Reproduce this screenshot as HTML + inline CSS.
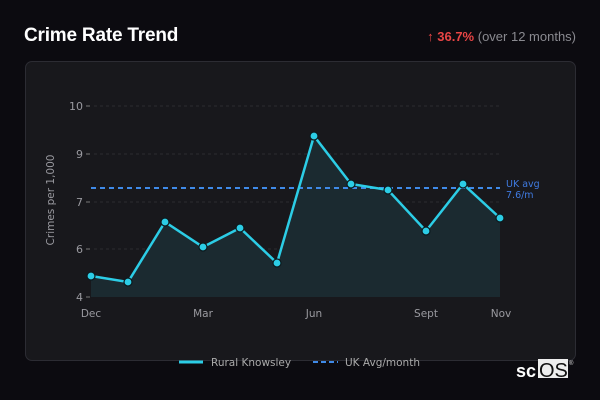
<!DOCTYPE html>
<html><head><meta charset="utf-8"><style>
html,body{margin:0;padding:0;width:600px;height:400px;background:#0c0b10;overflow:hidden;font-family:"Liberation Sans",sans-serif;}
.t{position:absolute;left:24px;top:25px;color:#fff;font:bold 19px "Liberation Sans",sans-serif;letter-spacing:-0.2px}
.c{position:absolute;left:25px;top:61px;width:549px;height:298px;background:#18181c;border:1px solid #2c2c33;border-radius:7px}
.r{position:absolute;right:24px;top:29px;font-size:13px;color:#8a8a90}
.r b{color:#e84545}
</style></head><body>
<div class="t">Crime Rate Trend</div>
<div class="r"><span style="color:#e84545">↑</span> <b>36.7%</b> (over 12 months)</div>
<div class="c"></div>
<svg width="600" height="400" style="position:absolute;left:0;top:0">
<g stroke="#2b2b31" stroke-dasharray="3,3" stroke-width="1">
<line x1="94" y1="106" x2="500" y2="106"/><line x1="94" y1="154" x2="500" y2="154"/><line x1="94" y1="202" x2="500" y2="202"/><line x1="94" y1="249" x2="500" y2="249"/>
</g>
<g stroke="#777" stroke-width="1"><line x1="86" y1="106" x2="90" y2="106"/><line x1="86" y1="154" x2="90" y2="154"/><line x1="86" y1="202" x2="90" y2="202"/><line x1="86" y1="249" x2="90" y2="249"/><line x1="86" y1="297" x2="90" y2="297"/></g>
<g fill="#9a9aa0" font-size="11" font-family="DejaVu Sans,sans-serif" text-anchor="end">
<text x="83" y="110">10</text><text x="83" y="158">9</text><text x="83" y="206">7</text><text x="83" y="253">6</text><text x="83" y="301">4</text></g>
<text transform="translate(54,200) rotate(-90)" text-anchor="middle" fill="#9a9aa0" font-size="10.5" font-family="DejaVu Sans,sans-serif">Crimes per 1,000</text>
<g fill="#9a9aa0" font-size="10.5" font-family="DejaVu Sans,sans-serif" text-anchor="middle">
<text x="91" y="317">Dec</text><text x="203" y="317">Mar</text><text x="314" y="317">Jun</text><text x="426" y="317">Sept</text><text x="501" y="317">Nov</text></g>
<path d="M91,276 L128,282 L165,222 L203,247 L240,228 L277,263 L314,136 L351,184 L388,190 L426,231 L463,184 L500,218 L500,297 L91,297Z" fill="#1b2a30"/>
<line x1="91" y1="188" x2="500" y2="188" stroke="#3f8ae8" stroke-width="2" stroke-dasharray="5,4"/>
<path d="M91,276 L128,282 L165,222 L203,247 L240,228 L277,263 L314,136 L351,184 L388,190 L426,231 L463,184 L500,218" fill="none" stroke="#2ccde6" stroke-width="2.5"/>
<g fill="#2ccde6" stroke="#0c1a1e" stroke-width="1.2">
<circle cx="91" cy="276" r="4"/><circle cx="128" cy="282" r="4"/><circle cx="165" cy="222" r="4"/><circle cx="203" cy="247" r="4"/><circle cx="240" cy="228" r="4"/><circle cx="277" cy="263" r="4"/><circle cx="314" cy="136" r="4"/><circle cx="351" cy="184" r="4"/><circle cx="388" cy="190" r="4"/><circle cx="426" cy="231" r="4"/><circle cx="463" cy="184" r="4"/><circle cx="500" cy="218" r="4"/></g>
<g fill="#3f7ae0" font-size="9.5" font-family="DejaVu Sans,sans-serif"><text x="506" y="187">UK avg</text><text x="506" y="198">7.6/m</text></g>
<line x1="179" y1="362" x2="203" y2="362" stroke="#2ccde6" stroke-width="3"/>
<text x="211" y="366" fill="#aaa" font-size="10.5" font-family="DejaVu Sans,sans-serif">Rural Knowsley</text>
<line x1="313" y1="362" x2="338" y2="362" stroke="#3f8ae8" stroke-width="2" stroke-dasharray="5,3"/>
<text x="345" y="366" fill="#aaa" font-size="10.5" font-family="DejaVu Sans,sans-serif">UK Avg/month</text>
<text x="516" y="377" fill="#fff" font-size="18" font-weight="bold" font-family="Liberation Sans,sans-serif">sc</text>
<rect x="538" y="359" width="30" height="19" fill="#eee"/>
<text x="539" y="377" fill="#111" font-size="20" font-family="Liberation Sans,sans-serif">OS</text>
<text x="569" y="365" fill="#ddd" font-size="6">®</text>
</svg>
</body></html>
